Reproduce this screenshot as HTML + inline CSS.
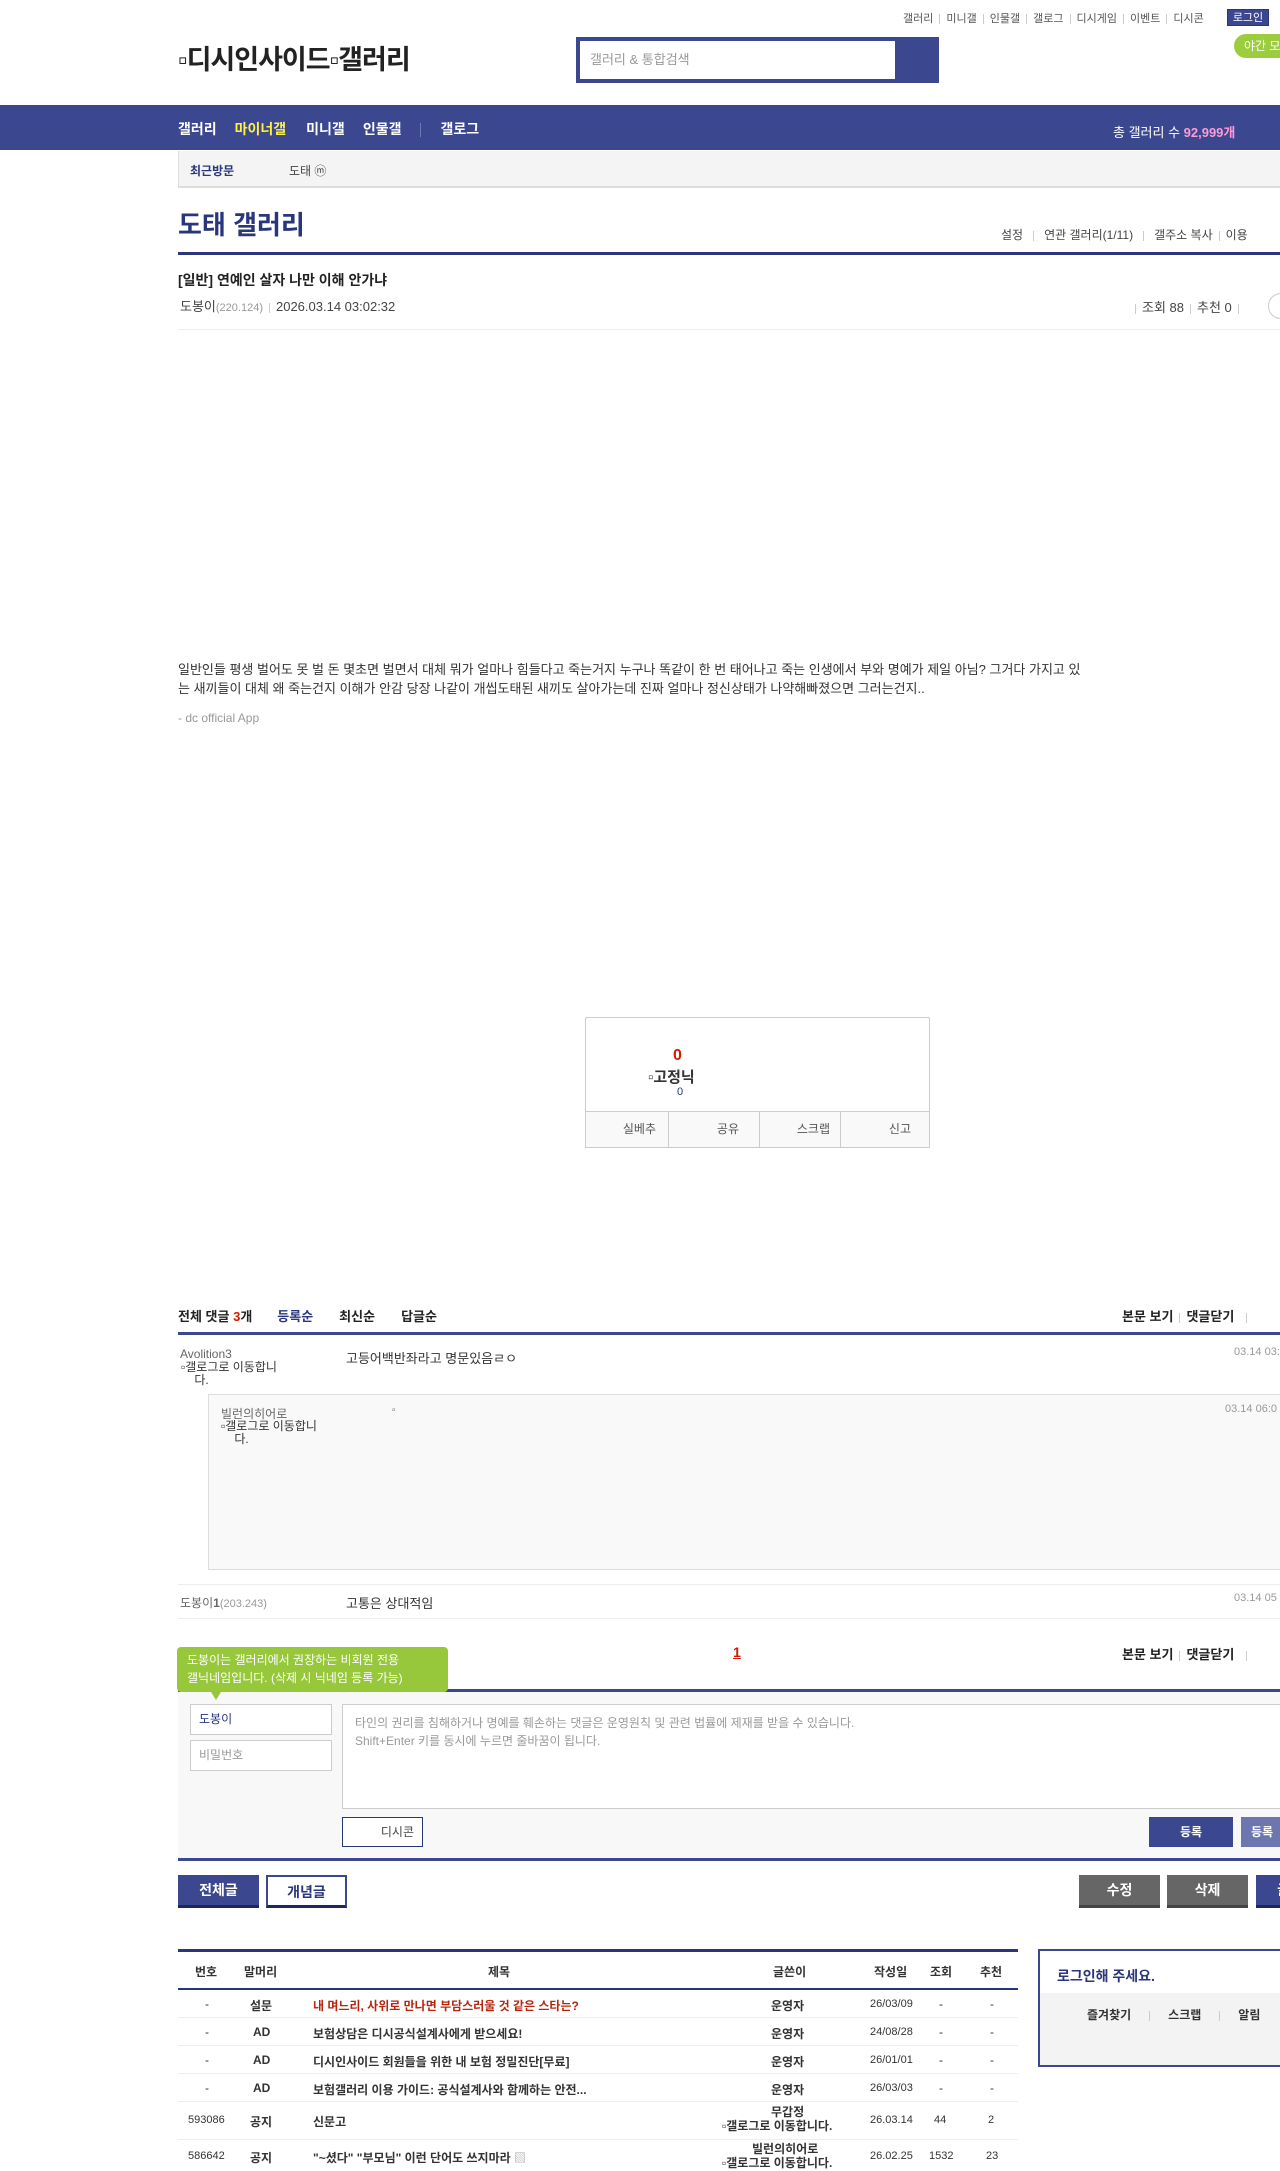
<!DOCTYPE html>
<html><head><meta charset="utf-8">
<style>
*{margin:0;padding:0;box-sizing:border-box}
body{width:1280px;height:2160px;overflow:hidden;position:relative;background:#fff;font-family:"Liberation Sans","Noto Sans CJK KR",sans-serif;font-size:12px;color:#333}
.a{position:absolute;white-space:nowrap}
.navy{color:#29367c}
.sep{display:inline-block;width:1px;height:10px;background:#ccc;margin:0 6px;vertical-align:middle}
.btn{position:absolute;height:33px;line-height:31px;text-align:center;font-size:14px;font-weight:bold;color:#fff;border-bottom:3px solid #1c2660}
</style></head><body>
<div class="a" style="top:10px;left:903px;font-size:11px;color:#555">갤러리<span class="sep"></span>미니갤<span class="sep"></span>인물갤<span class="sep"></span>갤로그<span class="sep"></span>디시게임<span class="sep"></span>이벤트<span class="sep"></span>디시콘</div>
<div class="a" style="top:9px;left:1227px;width:42px;height:17px;background:#3b4890;color:#fff;font-size:11px;line-height:17px;text-align:center;border:1px solid #29367c">로그인</div>
<div class="a" style="top:34px;left:1234px;width:60px;height:24px;background:#9ccd3f;border-radius:12px;color:#fff;font-size:12px;line-height:24px;padding-left:10px">야간 모드</div>
<div class="a" style="top:38px;left:178px;font-size:27px;font-weight:bold;color:#222;letter-spacing:-1px">▫디시인사이드▫갤러리</div>
<div class="a" style="top:37px;left:576px;width:363px;height:46px;background:#3b4890"></div>
<div class="a" style="top:41px;left:580px;width:315px;height:38px;background:#fff;color:#999;font-size:13px;line-height:38px;padding-left:10px">갤러리 &amp; 통합검색</div>
<div class="a" style="top:105px;left:0;width:1280px;height:45px;background:#3b4890"></div>
<div class="a" style="top:119px;left:178px;font-size:14px;font-weight:bold;color:#fff">갤러리<span style="color:#fff245;margin-left:18px">마이너갤</span><span style="margin-left:20px">미니갤</span><span style="margin-left:18px">인물갤</span><span style="display:inline-block;width:1px;height:14px;background:#6f7ab0;margin:0 19px;vertical-align:middle"></span>갤로그</div>
<div class="a" style="top:122px;left:1113px;font-size:13px;color:#fff">총 갤러리 수 <b style="color:#ff9ad4">92,999개</b></div>
<div class="a" style="top:151px;left:178px;width:1110px;height:37px;background:#f4f4f4;border-bottom:2px solid #ddd;border-left:1px solid #ddd"></div>
<div class="a navy" style="top:162px;left:190px;font-size:12px;font-weight:bold">최근방문</div>
<div class="a" style="top:162px;left:289px;font-size:12px;color:#444">도태 ⓜ</div>
<div class="a navy" style="top:205px;left:178px;font-size:26px;font-weight:bold">도태 갤러리</div>
<div class="a" style="top:226px;left:1001px;font-size:12px;color:#444">설정<span class="sep" style="margin:0 10px"></span>연관 갤러리(1/11)<span class="sep" style="margin:0 10px"></span>갤주소 복사<span class="sep"></span>이용</div>
<div class="a" style="top:252px;left:178px;width:1110px;height:3px;background:#29367c"></div>
<div class="a" style="top:270px;left:178px;font-size:14px;font-weight:bold;color:#222">[일반] 연예인 살자 나만 이해 안가냐</div>
<div class="a" style="top:296px;left:180px;font-size:13px;color:#444">도봉이<span style="font-size:11px;color:#999">(220.124)</span><span class="sep"></span>2026.03.14 03:02:32</div>
<div class="a" style="top:297px;left:1135px;font-size:13px;color:#444"><span class="sep" style="margin-left:0"></span>조회 88<span class="sep"></span>추천 0<span class="sep"></span></div>
<div class="a" style="top:293px;left:1268px;width:30px;height:26px;border:1px solid #ccc;border-radius:13px"></div>
<div class="a" style="top:329px;left:178px;width:1110px;height:1px;background:#eee"></div>
<div class="a" style="top:660px;left:178px;width:905px;white-space:normal;font-size:13px;line-height:19px;color:#333">일반인들 평생 벌어도 못 벌 돈 몇초면 벌면서 대체 뭐가 얼마나 힘들다고 죽는거지 누구나 똑같이 한 번 태어나고 죽는 인생에서 부와 명예가 제일 아님? 그거다 가지고 있는 새끼들이 대체 왜 죽는건지 이해가 안감 당장 나같이 개씹도태된 새끼도 살아가는데 진짜 얼마나 정신상태가 나약해빠졌으면 그러는건지..</div>
<div class="a" style="top:711px;left:178px;font-size:12px;color:#999">- dc official App</div>
<div class="a" style="top:1017px;left:585px;width:345px;height:131px;border:1px solid #ccc;border-radius:2px"></div>
<div class="a" style="top:1047px;left:673px;font-size:16px;font-weight:bold;color:#d31900">0</div>
<div class="a" style="top:1066px;left:648px;font-size:15px;font-weight:bold;color:#333">▫고정닉</div>
<div class="a" style="top:1086px;left:677px;font-size:11px;color:#29367c">0</div>
<div class="a" style="top:1111px;left:585px;width:345px;height:37px;border:1px solid #ccc;background:#f9f9f9;display:flex">
<div style="flex:1;border-right:1px solid #ccc;text-align:right;padding-right:12px;line-height:35px;color:#555">실베추</div>
<div style="flex:1;border-right:1px solid #ccc;text-align:right;padding-right:20px;line-height:35px;color:#555">공유</div>
<div style="flex:1;border-right:1px solid #ccc;text-align:right;padding-right:10px;line-height:35px;color:#555">스크랩</div>
<div style="flex:1;text-align:right;padding-right:18px;line-height:35px;color:#555">신고</div></div>
<div class="a" style="top:1306px;left:178px;font-size:13px;font-weight:bold;color:#222">전체 댓글 <span style="color:#d31900">3</span>개<span class="navy" style="margin-left:25px">등록순</span><span style="margin-left:26px">최신순</span><span style="margin-left:26px">답글순</span></div>
<div class="a" style="top:1306px;left:1122px;font-size:13px;font-weight:bold;color:#222">본문 보기<span class="sep"></span>댓글닫기<span class="sep" style="margin-left:12px"></span></div>
<div class="a" style="top:1332px;left:178px;width:1110px;height:3px;background:#3b4890"></div>
<div class="a" style="top:1347px;left:180px;font-size:12px;color:#666">Avolition3</div>
<div class="a" style="top:1361px;left:181px;font-size:12px;line-height:13px;color:#333">▫갤로그로 이동합니<br>&nbsp;&nbsp;&nbsp;&nbsp;다.</div>
<div class="a" style="top:1348px;left:346px;font-size:13px;color:#333">고등어백반좌라고 명문있음ㄹㅇ</div>
<div class="a" style="top:1346px;left:1234px;font-size:11px;color:#999">03.14 03:</div>
<div class="a" style="top:1394px;left:208px;width:1080px;height:176px;background:#f9f9f9;border:1px solid #ddd"></div>
<div class="a" style="top:1405px;left:221px;font-size:12px;color:#666">빌런의히어로</div>
<div class="a" style="top:1420px;left:221px;font-size:12px;line-height:13px;color:#333">▫갤로그로 이동합니<br>&nbsp;&nbsp;&nbsp;&nbsp;다.</div>
<div class="a" style="top:1405px;left:392px;font-size:10px;color:#666">▫</div>
<div class="a" style="top:1403px;left:1225px;font-size:11px;color:#999">03.14 06:0</div>
<div class="a" style="top:1584px;left:178px;width:1110px;height:1px;background:#eee"></div>
<div class="a" style="top:1594px;left:180px;font-size:12px;color:#666">도봉이<b>1</b><span style="font-size:11px;color:#999">(203.243)</span></div>
<div class="a" style="top:1593px;left:346px;font-size:13px;color:#333">고통은 상대적임</div>
<div class="a" style="top:1592px;left:1234px;font-size:11px;color:#999">03.14 05</div>
<div class="a" style="top:1618px;left:178px;width:1110px;height:1px;background:#eee"></div>
<div class="a" style="top:1644px;left:733px;font-size:14px;font-weight:bold;color:#d31900;text-decoration:underline">1</div>
<div class="a" style="top:1644px;left:1122px;font-size:13px;font-weight:bold;color:#222">본문 보기<span class="sep"></span>댓글닫기<span class="sep" style="margin-left:12px"></span></div>
<div class="a" style="top:1689px;left:178px;width:1110px;height:3px;background:#3b4890"></div>
<div class="a" style="top:1692px;left:178px;width:1110px;height:168px;background:#f8f8f8"></div>
<div class="a" style="top:1647px;left:177px;width:271px;height:45px;background:#97c83b;border-radius:4px;color:#fff;font-size:12px;line-height:18px;padding:4px 10px 4px 10px;white-space:normal">도봉이는 갤러리에서 권장하는 비회원 전용<br>갤닉네임입니다. (삭제 시 닉네임 등록 가능)</div>
<div class="a" style="top:1692px;left:211px;width:0;height:0;border-left:5px solid transparent;border-right:5px solid transparent;border-top:8px solid #97c83b"></div>
<div class="a" style="top:1704px;left:190px;width:142px;height:31px;background:#fff;border:1px solid #ccc;font-size:12px;line-height:29px;padding-left:8px;color:#29367c">도봉이</div>
<div class="a" style="top:1740px;left:190px;width:142px;height:31px;background:#fff;border:1px solid #ccc;font-size:12px;line-height:29px;padding-left:8px;color:#999">비밀번호</div>
<div class="a" style="top:1704px;left:342px;width:950px;height:105px;background:#fff;border:1px solid #ccc;font-size:12px;line-height:18px;padding:9px 12px;color:#999;white-space:normal">타인의 권리를 침해하거나 명예를 훼손하는 댓글은 운영원칙 및 관련 법률에 제재를 받을 수 있습니다.<br>Shift+Enter 키를 동시에 누르면 줄바꿈이 됩니다.</div>
<div class="a" style="top:1817px;left:342px;width:81px;height:30px;background:#fff;border:1px solid #29367c;font-size:12px;line-height:28px;text-align:right;padding-right:8px;color:#444">디시콘</div>
<div class="a" style="top:1817px;left:1149px;width:84px;height:30px;background:#3b4890;color:#fff;font-size:12px;font-weight:bold;line-height:30px;text-align:center">등록</div>
<div class="a" style="top:1817px;left:1241px;width:84px;height:30px;background:#6c77b0;color:#fff;font-size:12px;font-weight:bold;line-height:30px;padding-left:10px">등록</div>
<div class="a" style="top:1858px;left:178px;width:1110px;height:3px;background:#3b4890"></div>
<div class="btn" style="top:1875px;left:178px;width:81px;background:#3b4890">전체글</div>
<div class="btn" style="top:1875px;left:266px;width:81px;background:#fff;color:#29367c;border:2px solid #3b4890;border-bottom:3px solid #1c2660">개념글</div>
<div class="btn" style="top:1875px;left:1079px;width:81px;background:#666;border-bottom-color:#444">수정</div>
<div class="btn" style="top:1875px;left:1167px;width:81px;background:#666;border-bottom-color:#444">삭제</div>
<div class="btn" style="top:1875px;left:1256px;width:81px;background:#3b4890">글쓰기</div>
<div class="a" style="top:1949px;left:178px;width:840px;height:3px;background:#29367c"></div>
<div class="a" style="top:1963px;left:0;width:1280px;font-size:12px;font-weight:bold;color:#333">
<span class="a" style="left:195px">번호</span><span class="a" style="left:244px">말머리</span><span class="a" style="left:488px">제목</span><span class="a" style="left:773px">글쓴이</span><span class="a" style="left:874px">작성일</span><span class="a" style="left:930px">조회</span><span class="a" style="left:980px">추천</span></div>
<div class="a" style="top:1988px;left:178px;width:840px;height:2px;background:#29367c"></div>
<div class="a" style="top:1990px;left:0;width:1280px;font-size:12px;color:#333">
 <div class="a" style="top:0;left:178px;width:840px;height:28px;border-bottom:1px solid #eee"></div>
 <span class="a" style="top:7px;left:205px">-</span><b class="a" style="top:7px;left:250px">설문</b><b class="a" style="top:7px;left:313px;color:#b8250f">내 며느리, 사위로 만나면 부담스러울 것 같은 스타는?</b><b class="a" style="top:7px;left:771px">운영자</b><span class="a" style="top:8px;left:870px;font-size:11px">26/03/09</span><span class="a" style="top:7px;left:939px">-</span><span class="a" style="top:7px;left:990px">-</span>
 <div class="a" style="top:28px;left:178px;width:840px;height:28px;border-bottom:1px solid #eee"></div>
 <span class="a" style="top:35px;left:205px">-</span><b class="a" style="top:35px;left:253px">AD</b><b class="a" style="top:35px;left:313px">보험상담은 디시공식설계사에게 받으세요!</b><b class="a" style="top:35px;left:771px">운영자</b><span class="a" style="top:36px;left:870px;font-size:11px">24/08/28</span><span class="a" style="top:35px;left:939px">-</span><span class="a" style="top:35px;left:990px">-</span>
 <div class="a" style="top:56px;left:178px;width:840px;height:28px;border-bottom:1px solid #eee"></div>
 <span class="a" style="top:63px;left:205px">-</span><b class="a" style="top:63px;left:253px">AD</b><b class="a" style="top:63px;left:313px">디시인사이드 회원들을 위한 내 보험 정밀진단[무료]</b><b class="a" style="top:63px;left:771px">운영자</b><span class="a" style="top:64px;left:870px;font-size:11px">26/01/01</span><span class="a" style="top:63px;left:939px">-</span><span class="a" style="top:63px;left:990px">-</span>
 <div class="a" style="top:84px;left:178px;width:840px;height:28px;border-bottom:1px solid #eee"></div>
 <span class="a" style="top:91px;left:205px">-</span><b class="a" style="top:91px;left:253px">AD</b><b class="a" style="top:91px;left:313px">보험갤러리 이용 가이드: 공식설계사와 함께하는 안전...</b><b class="a" style="top:91px;left:771px">운영자</b><span class="a" style="top:92px;left:870px;font-size:11px">26/03/03</span><span class="a" style="top:91px;left:939px">-</span><span class="a" style="top:91px;left:990px">-</span>
 <div class="a" style="top:112px;left:178px;width:840px;height:38px;border-bottom:1px solid #eee"></div>
 <span class="a" style="top:124px;left:188px;font-size:11px">593086</span><b class="a" style="top:123px;left:250px">공지</b><b class="a" style="top:123px;left:313px">신문고</b><b class="a" style="top:113px;left:771px">무갑정</b><b class="a" style="top:127px;left:722px">▫갤로그로 이동합니다.</b><span class="a" style="top:124px;left:870px;font-size:11px">26.03.14</span><span class="a" style="top:124px;left:934px;font-size:11px">44</span><span class="a" style="top:124px;left:988px;font-size:11px">2</span>
 <span class="a" style="top:160px;left:188px;font-size:11px">586642</span><b class="a" style="top:159px;left:250px">공지</b><b class="a" style="top:159px;left:313px">"~셨다" "부모님" 이런 단어도 쓰지마라 <span style="color:#aaa;font-weight:normal">▧</span></b><b class="a" style="top:150px;left:752px">빌런의히어로</b><b class="a" style="top:164px;left:722px">▫갤로그로 이동합니다.</b><span class="a" style="top:160px;left:870px;font-size:11px">26.02.25</span><span class="a" style="top:160px;left:929px;font-size:11px">1532</span><span class="a" style="top:160px;left:986px;font-size:11px">23</span>
</div>
<div class="a" style="top:1949px;left:1038px;width:260px;height:118px;border:2px solid #3b4890"></div>
<div class="a navy" style="top:1966px;left:1057px;font-size:14px;font-weight:bold">로그인해 주세요.</div>
<div class="a" style="top:1993px;left:1040px;width:250px;height:72px;background:#f3f3f3"></div>
<div class="a" style="top:2006px;left:1087px;font-size:12px;font-weight:bold;color:#333">즐겨찾기<span class="sep" style="margin:0 18px"></span>스크랩<span class="sep" style="margin:0 18px"></span>알림</div>
</body></html>
